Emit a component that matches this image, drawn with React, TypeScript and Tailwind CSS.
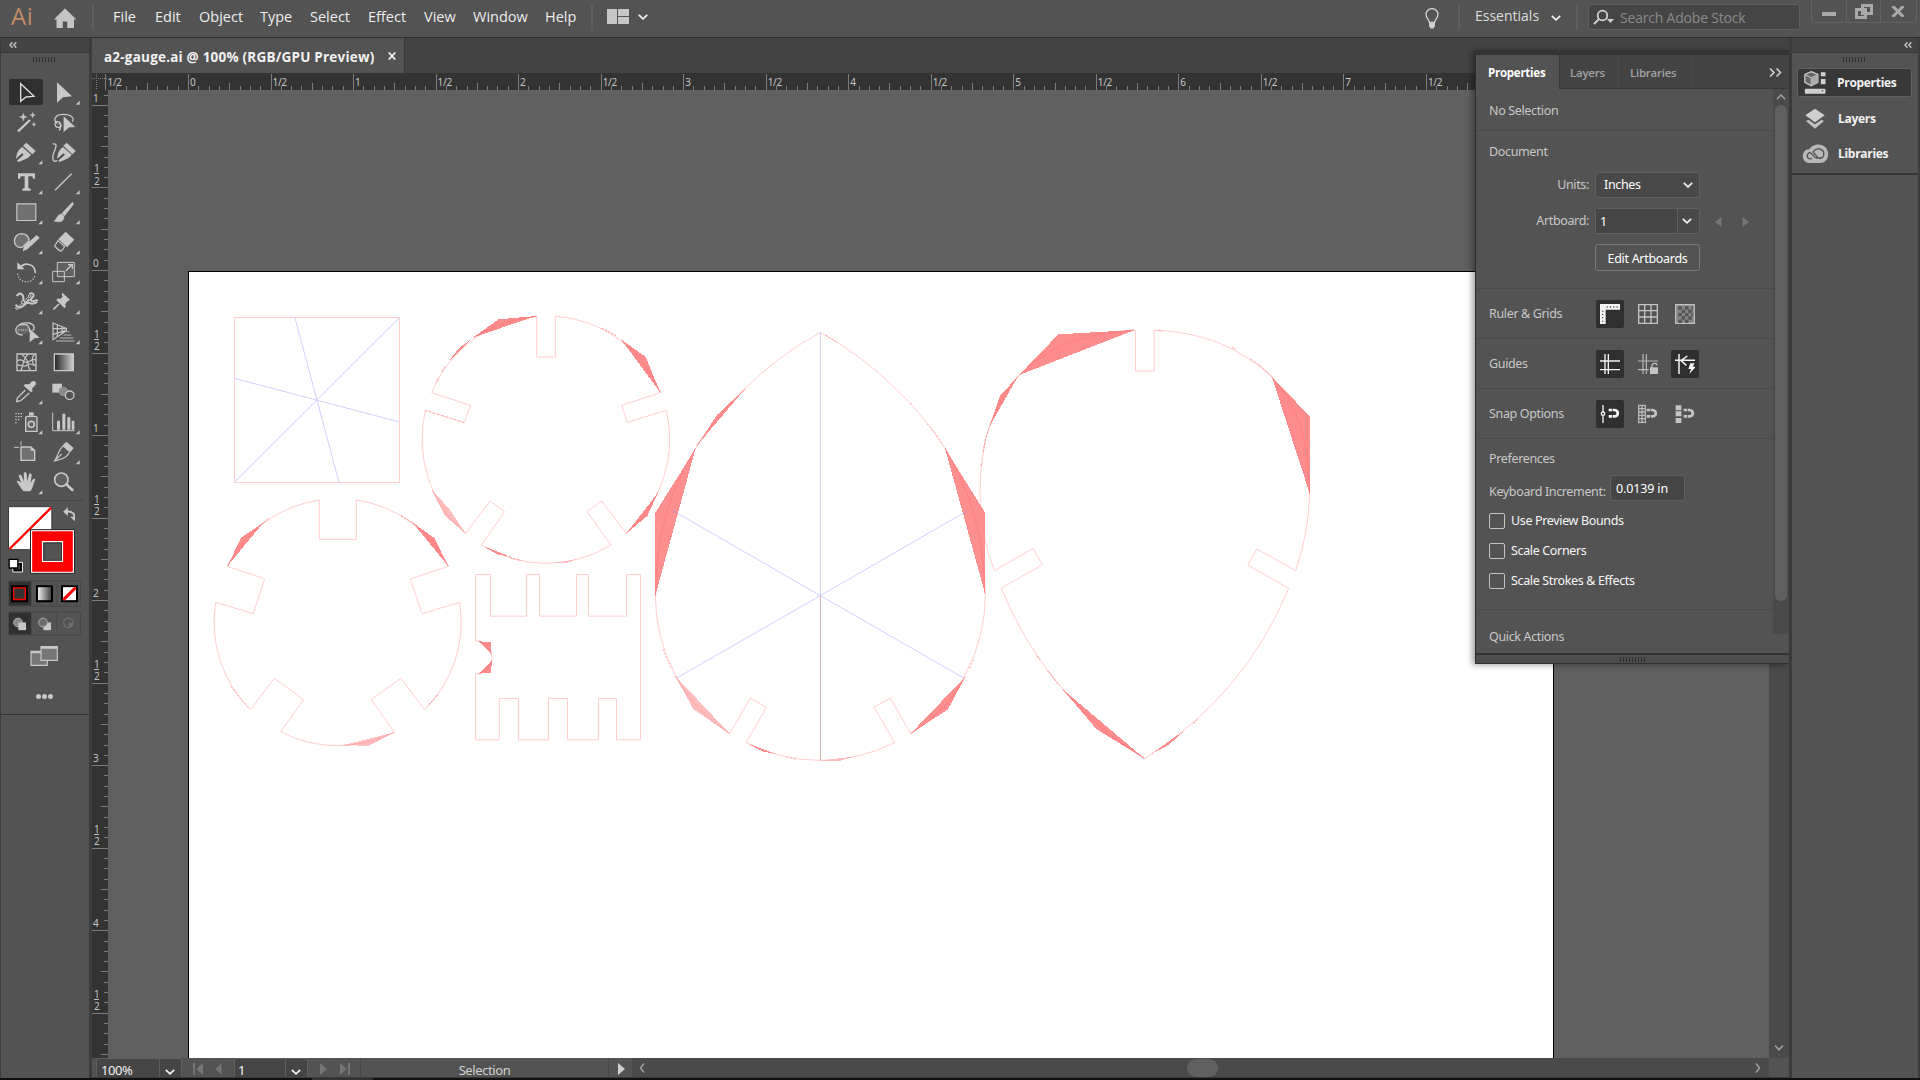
import React from 'react';

type IconProps = { vb: string; className?: string; children: React.ReactNode };

const Icon = ({ vb, className = '', children }: IconProps) => (
  <svg viewBox={vb} className={`block shrink-0 ${className}`} fill="none">
    {children}
  </svg>
);

const G = '#c8c8c8';

const Corner = ({ x, y }: { x: number; y: number }) => <path d={`M${x} ${y}v-12l-12 12z`} fill={G} />;

const Chevron = ({ className = '' }: { className?: string }) => (
  <Icon vb="0 0 10 6" className={`h-[6px] w-[10px] ${className}`}>
    <path d="M.8 .8 5 4.8 9.2 .8" stroke="#f0f0f0" strokeWidth="1.8" />
  </Icon>
);

const menus: [string, string][] = [
  ['File', 'w-[42px]'],
  ['Edit', 'w-[44px]'],
  ['Object', 'w-[61px]'],
  ['Type', 'w-[50px]'],
  ['Select', 'w-[58px]'],
  ['Effect', 'w-[56px]'],
  ['View', 'w-[49px]'],
  ['Window', 'w-[72px]'],
  ['Help', 'w-[46px]'],
];

function MenuBar() {
  return (
    <header className="flex h-[38px] shrink-0 items-start border-b border-[#303030] bg-[#535353]">
      <div className="mt-[1px] ml-[11px] w-[41px] font-['Open_Sans'] text-[24px] leading-[30px] font-medium tracking-[0.5px] text-[#c08a66]">Ai</div>
      <Icon vb="0 0 24 20" className="mt-[8px] ml-[1px] h-[20px] w-[24px]">
        <path d="M12 .5 23.5 11.500H21V20H14.200V13.500H9.800V20H3.500V11.500H.8z" fill="#c4c4c4" />
      </Icon>
      <div className="mt-[5px] ml-[15px] h-[25px] w-[2px] bg-[#5f5f5f]" />
      <nav className="ml-[19px] flex font-['Open_Sans'] text-[14.5px] leading-[33px] text-[#ececec]">
        {menus.map(([label, w]) => (
          <span key={label} className={`${w} whitespace-nowrap`}>{label}</span>
        ))}
      </nav>
      <div className="mt-[5px] h-[25px] w-[2px] bg-[#5f5f5f]" />
      <div className="mt-[9px] ml-[14px] flex h-[15px] w-[22px] gap-[1px]">
        <div className="w-[10px] bg-[#c6c6c6]" />
        <div className="flex flex-1 flex-col gap-[1px]">
          <div className="flex-1 bg-[#c6c6c6]" />
          <div className="flex-1 bg-[#c6c6c6]" />
        </div>
      </div>
      <Chevron className="mt-[14px] ml-[9px]" />
      <div className="flex-1" />
      <Icon vb="0 0 14 21" className="mt-[8px] h-[21px] w-[14px]">
        <path d="M4.500 14.500C4.500 11.500 1 10.500 1 6.600a6 6 0 0 1 12 0c0 3.900-3.500 4.900-3.500 7.900z" stroke="#cfcfcf" strokeWidth="1.400" />
        <path d="M4 14.500h6v3.500l-1.500 2.500h-3L4 18z" fill="#cfcfcf" />
      </Icon>
      <div className="mt-[5px] ml-[19px] h-[25px] w-[2px] bg-[#5f5f5f]" />
      <div className="ml-[15px] w-[76px] font-['Open_Sans'] text-[14px] leading-[32px] text-[#dcdcdc]">Essentials</div>
      <Chevron className="mt-[15px]" />
      <div className="mt-[5px] ml-[15px] h-[25px] w-[2px] bg-[#5f5f5f]" />
      <div className="mt-[4px] ml-[10px] flex h-[26px] w-[212px] rounded-[3px] border border-[#5f5f5f] bg-[#454545]">
        <Icon vb="0 0 22 16" className="mt-[4px] ml-[4px] h-[16px] w-[22px]">
          <circle cx="9.500" cy="6.500" r="4.800" stroke="#d0d0d0" strokeWidth="1.800" />
          <path d="M6 10 1 15" stroke="#d0d0d0" strokeWidth="2" />
          <path d="M14 10h7l-3.500 4z" fill="#d0d0d0" />
        </Icon>
        <span className="ml-[5px] font-['Open_Sans'] text-[14px] leading-[25px] tracking-[-0.2px] text-[#8a8a8a]">Search Adobe Stock</span>
      </div>
      <div className="ml-[11px] mr-[3px] flex h-[23px] w-[106px] rounded-b-[4px] border border-t-0 border-[#636363]">
        <div className="w-[35px] border-r border-[#636363] pt-[12px] pl-[10px]">
          <div className="h-[4px] w-[14px] bg-[#a9a9a9]" />
        </div>
        <div className="w-[34px] border-r border-[#636363] pt-[4px] pl-[8px]">
          <Icon vb="0 0 18 15" className="h-[15px] w-[18px]">
            <path d="M1.500 5.500h9v8h-9zM7.500 1.500h9v8h-9z" stroke="#a9a9a9" strokeWidth="3" />
          </Icon>
        </div>
        <div className="pt-[6px] pl-[10px]">
          <Icon vb="0 0 14 11" className="h-[11px] w-[14px]">
            <path d="M1.500 0 12.500 11M12.500 0 1.500 11" stroke="#a9a9a9" strokeWidth="3" />
          </Icon>
        </div>
      </div>
    </header>
  );
}

const Grip = ({ n = 8 }: { n?: number }) => (
  <div className="flex gap-[2px]">
    {Array.from({ length: n }, (_, i) => (
      <div key={i} className="h-[5px] w-[1px] bg-[#2e2e2e]" />
    ))}
  </div>
);

const DoubleLeft = () => (
  <Icon vb="0 0 8 6" className="h-[6px] w-[8px]">
    <path d="M3.500 .3 1 3l2.500 2.700M7.300 .3 4.800 3l2.500 2.700" stroke="#c4c4c4" strokeWidth="1.500" />
  </Icon>
);

/* Toolbox glyphs: each is drawn in a 108 x 90 cell whose origin is given by vb. */
const tools: { vb: string; on?: boolean; art: React.ReactNode }[] = [
  { vb: '24 21 108 90', on: true, art: <path d="M62 41 102 79 78 81 62 94z" stroke="#dedede" strokeWidth="4" /> },
  { vb: '138 21 108 90', art: <><path d="M171 37 216 79 189 82 171 98z" fill={G} /><Corner x={239} y={104} /></> },
  { vb: '24 111 108 90', art: <><path d="M54 184 90 150" stroke={G} strokeWidth="7" /><path d="m70 130 3 8 8 3-8 3-3 9-3-9-9-3 9-3zM98 127l2 6 6 2-6 2-2 7-2-7-6-2 6-2zM102 157l1 4 5 2-5 2-1 5-2-5-4-2 4-2z" fill={G} stroke={G} /></> },
  { vb: '138 111 108 90', art: <><path d="M172 160c-14-6-8-27 16-27 26-1 38 14 28 22M177 181c6-4 8-26-4-26s-9 18 3 17 8-12 0-11" stroke={G} strokeWidth="4" /><path d="m190 137 37 34-20 2-17 15z" fill={G} stroke="#535353" strokeWidth="1.500" /></> },
  { vb: '24 201 108 90', art: <><path d="m79 218 28 25-10 10-28-26zM66 230l27 24c-7 11-22 16-38 22l-4-4 20-18-5-4-18 16c2-16 6-26 18-34z" fill={G} /><Corner x={127} y={283} /></> },
  { vb: '138 201 108 90', art: <><path d="M158 222c20-4 5 18 1 34-2 12 0 22 13 16" stroke={G} strokeWidth="4" /><path d="m200 218 27 25-10 10-27-26zM188 230l27 24c-7 11-22 16-36 22l-4-4 20-18-5-4-18 16c0-16 6-26 16-34z" fill={G} /></> },
  { vb: '24 291 108 90', art: <><path d="M54 310h51v16h-6l-2-7H85v35l7 2v6H67v-6l7-2v-35H62l-2 7h-6z" fill={G} /><Corner x={127} y={373} /></> },
  { vb: '138 291 108 90', art: <><path d="m165 361 50-50" stroke={G} strokeWidth="4" /><Corner x={239} y={373} /></> },
  { vb: '24 381 108 90', art: <><path d="M50.500 401.500h57v50h-57z" fill="#707070" stroke={G} strokeWidth="3.500" /><Corner x={127} y={463} /></> },
  { vb: '138 381 108 90', art: <><path d="m217 397 4 5-27 35-8-7zM183 432c14 2 10 21-2 23-8 1-13 0-19-1 9-7 9-19 21-22z" fill={G} stroke={G} strokeWidth="1.500" /><Corner x={239} y={463} /></> },
  { vb: '24 471 108 90', art: <><path d="M63 533c-27-1-26-41 1-42 17 0 25 13 22 23l-18 17z" fill="#707070" stroke={G} strokeWidth="4" /><path d="m110 495 9 9-37 34-14 6 4-15z" fill={G} /><Corner x={127} y={553} /></> },
  { vb: '138 471 108 90', art: <><path d="m197 485 26 24-22 23-26-24z" fill={G} /><path d="m174 512 20 18-9 13q-8 0-21-15z" stroke={G} strokeWidth="3.500" /><Corner x={239} y={553} /></> },
  { vb: '24 561 108 90', art: <><path d="M60 594c11-18 46-16 46 16" stroke={G} strokeWidth="4.500" /><path d="M52 577v21h22z" fill={G} /><path d="M53 611c2 30 46 33 52 5" stroke={G} strokeWidth="4" strokeDasharray="3.500 5" /><Corner x={127} y={643} /></> },
  { vb: '138 561 108 90', art: <><path d="M172 577h51v43h-51z" fill="#606060" stroke={G} strokeWidth="3" /><path d="M158 604h35v31h-35z" stroke={G} strokeWidth="3" /><path d="m198 602 16-16M204 584h13v13" stroke={G} strokeWidth="4" /><Corner x={239} y={643} /></> },
  { vb: '24 651 108 90', art: <><path d="M50 678c10-15 22-4 20 11-2 14 12 10 18-2M88 672c6-4 13-2 13 4s-9 8-8 15c9 9 15-6 20 2M47 704c10 15 20 7 32-4 8-7 14 9 33-4" stroke={G} strokeWidth="6" /><path d="M50 716 90 676" stroke={G} strokeWidth="3" /><circle cx="69" cy="697" r="5" fill="#535353" stroke={G} strokeWidth="3" /><circle cx="51" cy="714" r="4" fill="#535353" stroke={G} strokeWidth="3" /><circle cx="89" cy="678" r="4" fill="#535353" stroke={G} strokeWidth="3" /><Corner x={127} y={733} /></> },
  { vb: '138 651 108 90', art: <><path d="m187 668 23 21-7 5-2 1-6 9 3 6-5 4-24-24 5-5 6 2 8-7-3-8z" fill={G} /><path d="m177 702-17 16" stroke={G} strokeWidth="5" /><Corner x={239} y={733} /></> },
  { vb: '24 741 108 90', art: <><path d="M52 771q10-15 34-12c16 2 21 15 12 23" stroke={G} strokeWidth="4" /><path d="M68 795c-28 1-27-31 0-31h12q10 8 9 22" fill="#666" stroke={G} strokeWidth="4" /><path d="M54 780h30" stroke={G} strokeWidth="3" strokeDasharray="4 3" /><path d="m89 776 30 27-15 2-15 12z" fill={G} /><Corner x={127} y={823} /></> },
  { vb: '138 741 108 90', art: <><path d="M159 759v50l40-27v-7zM172 763v37M186 769v22M159 776h40M160 793l36-11" stroke={G} strokeWidth="3.500" /><path d="M198 785h10M190 795h24M180 804h40M168 813h55" stroke="#969696" strokeWidth="4" /><Corner x={239} y={823} /></> },
  { vb: '24 831 108 90', art: <><path d="M51 852h57v50H51z" stroke={G} strokeWidth="4" /><path d="M52 873c19-12 15 10 32 3 11-5 14-10 24-6M52 886c14-3 21 8 29-1 10-9 18 4 27-1M63 901c9-19 4-33 21-48M91 901c-11-14-4-18-9-28-3-7-8-13-17-20M103 853c-11 13-6 30 3 35" stroke={G} strokeWidth="3.500" /></> },
  {
    vb: '138 831 108 90',
    art: (
      <>
        <defs>
          <linearGradient id="tool-grad"><stop stopColor="#222" /><stop offset="1" stopColor="#d0d0d0" /></linearGradient>
        </defs>
        <path d="M163 852h57v50h-57z" fill="url(#tool-grad)" stroke={G} strokeWidth="4" />
      </>
    ),
  },
  { vb: '24 -39 108 90', art: <><path d="M89-19c6-14 23-11 18 2l-11 12 2 7-5 4-22-20 5-5 6 1z" fill={G} transform="translate(0 1)" /><path d="M76 0 52 24l-2 11 12-3L88 9" stroke={G} strokeWidth="4" /><Corner x={127} y={43} /></> },
  { vb: '138 -39 108 90', art: <><path d="M157-19h29V8h-29z" fill={G} /><circle cx="190" cy="4" r="13" fill="#8a8a8a" stroke="#9c9c9c" strokeWidth="2" /><circle cx="209" cy="16" r="13" fill="#535353" stroke={G} strokeWidth="4" /></> },
  { vb: '24 51 108 90', art: <><path d="M87 67h14v10H87z" fill={G} /><path d="M77 83q1-4 7-4h20q7 0 7 5v40H77z" fill="#606060" stroke={G} strokeWidth="4" /><circle cx="94" cy="103" r="9" stroke={G} strokeWidth="5" /><path d="M46 71h22M46 80h22M46 89h15M46 98h8" stroke={G} strokeWidth="4" strokeDasharray="4 4" /><Corner x={127} y={133} /></> },
  { vb: '138 51 108 90', art: <><path d="M158 68v54h66" stroke={G} strokeWidth="3" /><path d="M171 91h9v27h-9zM187 70h9v48h-9zM202 81h9v37h-9zM215 91h8v27h-8z" fill={G} transform="translate(0 1)" /><Corner x={239} y={133} /></> },
  { vb: '24 141 108 90', art: <><path d="M63 171h29l12 10v30H63z" fill="#707070" stroke={G} strokeWidth="4" /><path d="M42 172h15M63 154v12" stroke={G} strokeWidth="3" /><path d="m92 169 14 13H92z" fill={G} /></> },
  { vb: '138 141 108 90', art: <><path d="m199 155 22 19-9 12-24-20z" fill={G} /><path d="m190 168 18 16c-3 18-23 23-44 29 10-18 14-38 26-45zM164 212l21-20" stroke={G} strokeWidth="3.500" /><Corner x={239} y={223} /></> },
  { vb: '24 231 108 90', art: <><path d="M64 296c-5-10-10-16-14-21 3-6 9-2 14 5l-8-22c1-5 7-4 9 0l7 16-1-23c2-6 8-5 9 0l2 23 5-21c3-5 9-2 8 3l-3 23 7-12c5-4 8 0 6 4-6 14-7 24-14 33H71z" fill={G} /><Corner x={127} y={313} /></> },
  { vb: '138 231 108 90', art: <><circle cx="184" cy="269" r="20" fill="#606060" stroke={G} strokeWidth="5" /><path d="m199 283 18 17" stroke={G} strokeWidth="8" strokeLinecap="round" /></> },
];

function ToolPanel() {
  return (
    <aside className="flex w-[92px] shrink-0 border-r-[3px] border-l border-[#3c3c3c] bg-[#535353]">
      <div className="flex w-full flex-col">
        <div className="flex h-[15px] items-center border-b border-[#373737] bg-[#434343] pl-[8px]"><DoubleLeft /></div>
        <div className="mt-[4px] ml-[32px]"><Grip /></div>
        <div className="mt-[15px] grid grid-cols-[38px_38px] pl-[7px]">
          {tools.map((t, i) => (
            <div key={i} className="flex h-[30px] w-[36px] items-center">
              <div className={t.on ? 'ml-[1px] h-[26px] w-[34px] overflow-hidden rounded-[2px] bg-[#2f2f2f]' : ''}>
                <Icon vb={t.vb} className={t.on ? '-mt-[2px] -ml-[1px] h-[30px] w-[36px]' : 'h-[30px] w-[36px]'}>{t.art}</Icon>
              </div>
            </div>
          ))}
        </div>
        <div className="mt-[3px] ml-[7px] h-px w-[76px] bg-[#484848]" />
        {/* Fill and stroke swatches */}
        <Icon vb="24 345 200 210" className="mt-[4px] ml-[7px] h-[70px] w-[67px]">
          <path d="M25 350h130v129H25z" fill="#fff" stroke="#3a3a3a" strokeWidth="3" />
          <path d="M28 477 153 353" stroke="#f00" strokeWidth="7" />
          <path d="M91 419h132v131H91z" fill="#fff" stroke="#222" strokeWidth="3" />
          <path d="M96 424h122v121H96z" fill="#f00" />
          <path d="M127 455h60v59h-60z" fill="#535353" stroke="#fff" strokeWidth="3.500" />
          <path d="M131 459h53v52h-53z" stroke="#222" strokeWidth="2" />
          <path d="M199 365c17-3 26 8 24 20" stroke={G} strokeWidth="6" />
          <path d="m189 365 14-13v26zM210 380h22l-9 13z" fill={G} />
          <path d="M38 517h29v29H38z" fill="#000" stroke="#eee" strokeWidth="3" />
          <path d="M45 524h14v14H45z" fill="#535353" />
          <path d="M27 508h26v26H27z" fill="#fff" stroke="#000" strokeWidth="4" />
        </Icon>
        <Icon vb="24 573 219 80" className="mt-[5px] ml-[7px] h-[27px] w-[73px]">
          <rect x="25" y="575" width="217" height="76" rx="6" stroke="#474747" strokeWidth="3" />
          <path d="M27 577h66v72H27z" fill="#303030" />
          <path d="M94 576v74M170 576v74" stroke="#474747" strokeWidth="2" />
          <path d="M33 588h51v51H33zM108 588h51v51h-51zM183 588h51v51h-51z" fill="#000" />
          <path d="M41 596h35v35H41z" fill="#333" stroke="#f00" strokeWidth="4" />
          <path d="M114 594h39v39h-39z" fill="url(#swatch-grad)" />
          <path d="M189 594h39v39h-39z" fill="#fff" />
          <path d="m190 632 37-37" stroke="#f00" strokeWidth="9" />
          <defs><linearGradient id="swatch-grad"><stop stopColor="#eee" /><stop offset="1" stopColor="#444" /></linearGradient></defs>
        </Icon>
        <Icon vb="24 665 219 74" className="mt-[4px] ml-[7px] h-[25px] w-[73px]">
          <rect x="25" y="667" width="217" height="70" rx="6" stroke="#474747" strokeWidth="3" />
          <path d="M27 669h66v66H27z" fill="#303030" />
          <path d="M94 668v68M170 668v68" stroke="#474747" strokeWidth="2" />
          <circle cx="54" cy="699" r="13" fill="#8a8a8a" stroke="#b0b0b0" strokeWidth="3" />
          <path d="M55 699h23v23H55z" fill={G} />
          <path d="M130 699h23v23h-23z" fill={G} />
          <circle cx="129" cy="699" r="13" fill="#6c6c6c" stroke="#b0b0b0" strokeWidth="3" />
          <circle cx="205" cy="700" r="14" stroke="#707070" strokeWidth="4" />
          <path d="M206 700h11v12h-11z" fill="#707070" />
        </Icon>
        <Icon vb="90 765 87 66" className="mt-[9px] ml-[29px] h-[22px] w-[29px]">
          <path d="M93 784h49v42H93z" fill="#777" stroke={G} strokeWidth="3.500" />
          <path d="M123 770h49v41h-49z" fill="#777" stroke={G} strokeWidth="3.500" />
          <path d="M93 787h30M123 773h49" stroke={G} strokeWidth="6" />
        </Icon>
        <div className="mt-[27px] ml-[35px] flex gap-[1px]">
          <div className="h-[5px] w-[5px] rounded-full bg-[#c8c8c8]" />
          <div className="h-[5px] w-[5px] rounded-full bg-[#c8c8c8]" />
          <div className="h-[5px] w-[5px] rounded-full bg-[#c8c8c8]" />
        </div>
        <div className="mt-[15px] h-px bg-[#333]" />
      </div>
    </aside>
  );
}

const INCH = 165.05;

function TopRuler() {
  const ticks = Array.from({ length: 140 }, (_, i) => i - 8);
  return (
    <svg className="block h-[17px] w-[1697px] bg-[#333]" viewBox="92 73 1697 17">
      {ticks.map((i) => {
        const x = Math.round(188 + (i * INCH) / 16) + 0.5;
        const y = i % 8 === 0 ? 74 : i % 4 === 0 ? 83 : 86;
        return <path key={i} d={`M${x} ${y}V90`} stroke="#7c7c7c" />;
      })}
      {Array.from({ length: 17 }, (_, k) => k - 1).map((k) => (
        <text key={k} x={190 + (k * INCH) / 2} y="85.500" fontSize="10" letterSpacing="-0.3" fill="#c4c4c4" fontFamily="'Noto Sans', sans-serif">
          {k % 2 === 0 ? k / 2 : '1/2'}
        </text>
      ))}
      <path d="M92 78.500h16" stroke="#7c7c7c" strokeDasharray="1 1" />
      <path d="M96.500 74v16" stroke="#7c7c7c" strokeDasharray="1 1" />
    </svg>
  );
}

function SideRuler() {
  const ticks = Array.from({ length: 95 }, (_, i) => i - 17);
  return (
    <svg className="block h-[968px] w-[16px] shrink-0 bg-[#333]" viewBox="92 90 16 968">
      {ticks.map((i) => {
        const y = Math.round(270 + (i * INCH) / 16) + 0.5;
        const x = i % 8 === 0 ? 92 : i % 4 === 0 ? 101 : 104;
        return <path key={i} d={`M${x} ${y}H108`} stroke="#7c7c7c" />;
      })}
      {Array.from({ length: 12 }, (_, k) => k - 2).map((k) => {
        const y = 270 + (k * INCH) / 2;
        return k % 2 === 0 ? (
          <text key={k} x="93" y={y - 3} fontSize="10" fill="#c4c4c4" fontFamily="'Noto Sans', sans-serif">{Math.abs(k / 2)}</text>
        ) : (
          <g key={k} fill="#c4c4c4" fontSize="10" fontFamily="'Noto Sans', sans-serif">
            <text x="94" y={y - 15}>1</text>
            <path d={`M94 ${Math.round(y - 14)}h5v1h-5z`} />
            <text x="94" y={y - 2.500}>2</text>
          </g>
        );
      })}
    </svg>
  );
}

const FILL = '#ff8c8c';
const SOFT = '#ffbcbc';

function Artwork() {
  const line = { stroke: '#ffcfcf', strokeWidth: 3, fill: 'none' };
  const guide = { stroke: '#d0d0fc', strokeWidth: 3, fill: 'none' };
  const inner = { stroke: '#ff7c7c', strokeWidth: 2.5, fill: 'none' };
  const sliver = { stroke: '#ff9090', strokeWidth: 3, fill: 'none', strokeDasharray: '7 4' };
  return (
    <svg className="block h-[787px] w-[1364px]" viewBox="189 272 1364 787">
      <g transform="translate(200 300) scale(.33333)">
        <path d="M103.500 52.500H598.500V547.500H103.500z" {...line} />
        <path d="M285 54 417 547M598 53 103 547M103 235 598 366" {...guide} />
        <path d="M469 600V718H358V600A372 371 0 0 0 82 799L194 836 160 941 47 907A372 371 0 0 0 151 1229L223 1135 311 1199 242 1295A372 371 0 0 0 583 1297L514 1199 603 1135 674 1229A372 371 0 0 0 779 907L666 941 631 837 745 799A372 371 0 0 0 469 600" {...line} />
        <g shapeRendering="crispEdges">
          <path d="M190 668 124 712 82 799zM638 668 703 714 745 799z" fill={FILL} />
          <path d="M430 1336 506 1337 583 1297z" fill={SOFT} />
        </g>
        <path d="M205 656 190 668M603 647 638 668M686 1214 716 1182" {...sliver} />
        <path d="M92 1158 143 1221" {...sliver} stroke="#ffa8a8" />
        <path d="M190 668Q126 716 82 799M638 668Q708 722 745 799" {...inner} />
        <path d="M430 1336Q510 1334 583 1297" {...inner} stroke="#ffa4a4" />
      </g>
      <g transform="translate(410 300) scale(.33333)">
        <path d="M380 48V171H436V48A371 371 0 0 1 751 278L635 316 652 367 769 331A371 371 0 0 1 649 700L575 603 531 635 603 735A371 371 0 0 1 214 735L284 635 240 603 167 700A371 371 0 0 1 46 331L163 368 181 316 65 278A371 371 0 0 1 380 48" {...line} />
        <path d="M197 823.500H241.500V948.500H349.500V823.500H388.500V948.500H499.500V823.500H535.500V948.500H649.500V823.500H691.500V1319.500H619.500V1195.500H565.500V1319.500H472.500V1195.500H415.500V1319.500H325.500V1195.500H268V1319.500H196.500V1121.500H208Q246 1110 246 1071 246 1035 208 1023H196.500V823.500" {...line} />
        <g shapeRendering="crispEdges">
          <path d="M190 112 265 58 380 48zM118 182 147 144 190 113 152 150zM634 119 707 171 751 278zM744 578 712 648 649 700zM206 1024 243 1026V1062zM206 1121 243 1118 246 1082z" fill={FILL} />
          <path d="M67 571 104 647 167 700 118 627z" fill={SOFT} />
          <path d="M217 737 262 763 300 770 255 752z" fill={FILL} />
          <path d="M425 789 470 789 500 778z" fill={SOFT} />
        </g>
        <path d="M190 112Q275 61 380 49M634 119Q715 190 751 278M744 578Q705 655 649 700M206 1024Q240 1037 243 1062M206 1121Q240 1108 245 1082" {...inner} />
        <path d="M106 200 93 218M84 236 78 248M575 84 618 107M300 773 334 782" {...sliver} />
        <path d="M67 571Q100 645 167 700" {...inner} stroke="#ffa4a4" />
        <path d="M46 331 163 368" {...sliver} strokeDasharray="4 9" />
      </g>
      <g transform="translate(960 310) scale(.33333)">
        <path d="M526.500 61V183H582.500V61Q790 65 937 202 1049 319 1049 552 1045 675 1007 782L890 717 863 765 986 835Q855 1155 554 1346 253 1155 124 835L247 764 219 715 103 782Q59 670 60 555 60 430 90 345 120 259 178 195 295 73 524 61" {...line} />
        <g shapeRendering="crispEdges">
          <path d="M178 195 295 73 524 60zM90 347 119 259 174 199zM936 202 1050 319V553zM308 1138 410 1258 554 1346z" fill={FILL} />
          <path d="M575 1332 625 1305 676 1261 635 1288z" fill={FILL} />
        </g>
        <path d="M178 195Q295 73 524 60M90 347 Q120 260 174 199M936 202Q1050 319 1048 553M308 1138Q410 1258 554 1346" {...inner} />
        <path d="M596 61H608M817 113 828 119M872 147Q905 168 936 200M86 355Q74 390 70 425M64 460V468M230 1037 240 1049M262 1082 298 1126M700 1240 714 1227" {...sliver} />
      </g>
      <g transform="translate(640 310) scale(.33333)">
        <path d="M541 67Q410 140 313 238 232 314 167 415 46 607 46 857A495 495 0 0 0 269 1271L331 1164 379 1192 318 1298A495 495 0 0 0 764 1298L702 1192 751 1164 812 1271A495 495 0 0 0 1036 857Q1034 607 915 415 850 314 769 238 672 140 541 67" {...line} />
        <g shapeRendering="crispEdges">
          <path d="M167 415 46 608V857zM915 415 1035 607V850zM170 408 232 314 315 237zM976 1100 924 1198 812 1271z" fill={FILL} fillOpacity=".98" />
          <path d="M105 1097 160 1198 269 1271z" fill={SOFT} />
          <path d="M318 1298 370 1325 410 1333z" fill={FILL} />
          <path d="M541 1352 600 1352 650 1339z" fill={SOFT} />
        </g>
        <path d="M167 415Q46 607 47 857M915 415Q1032 607 1034 850M170 408Q232 314 315 237M976 1100Q920 1205 812 1271" {...inner} />
        <path d="M862 342Q890 372 906 402M70 1018Q80 1050 96 1080M1000 1050 988 1078M812 279 818 286M558 76 594 98M440 1341 466 1347" {...sliver} strokeDasharray="4 7" />
        <path d="M105 1097Q165 1205 269 1271" {...inner} stroke="#ffa4a4" />
        <path d="M541.500 67V857M99 602 541 857 971 1104M981 603 541 857 110 1104" {...guide} />
        <path d="M99 602 112 609M981 603 968 610" stroke="#d277a0" strokeWidth="3" />
        <path d="M541.500 857V1352" stroke="#dcb0b0" strokeWidth="3" />
      </g>
    </svg>
  );
}

function StatusBar() {
  const dim = '#757575';
  return (
    <div className="flex h-[20px] shrink-0 border-b border-[#3a3a3a] bg-[#535353] font-['Noto_Sans'] text-[13px] leading-[14px] text-[#f0f0f0]">
      <div className="ml-[4px] flex h-full w-[86px] rounded-t-[3px] border border-b-0 border-[#606060] bg-[#454545]">
        <span className="w-[63px] border-r border-[#606060] pt-[4px] pl-[4px] tracking-[-0.4px]">100%</span>
        <Chevron className="mt-[10px] ml-[5px]" />
      </div>
      <Icon vb="0 0 38 12" className="mt-[5px] ml-[10px] h-[12px] w-[38px]">
        <path d="M1 0h2v12H1zM11 0v12L4 6zM29.500 0v12L23.500 6z" fill={dim} />
      </Icon>
      <div className="ml-[4px] flex h-full w-[74px] rounded-t-[3px] border border-b-0 border-[#606060] bg-[#454545]">
        <span className="w-[51px] border-r border-[#606060] pt-[4px] pl-[3px]">1</span>
        <Chevron className="mt-[10px] ml-[5px]" />
      </div>
      <Icon vb="0 0 38 12" className="mt-[5px] ml-[11px] h-[12px] w-[38px]">
        <path d="M1 0v12l7-6zM21 0v12l7-6zM29 0h2v12h-2z" fill={dim} />
      </Icon>
      <div className="ml-[3px] w-[249px] border-x border-[#484848] pt-[5px] text-center tracking-[-0.4px] text-[#d0d0d0]">Selection</div>
      <div className="w-[23px] pt-[5px] pl-[9px]">
        <Icon vb="0 0 7 12" className="h-[12px] w-[7px]"><path d="M0 0v12l7-6z" fill="#d0d0d0" /></Icon>
      </div>
      <div className="flex w-[1137px] bg-[#4a4a4a]">
        <Icon vb="0 0 6 10" className="mt-[5px] ml-[7px] h-[10px] w-[6px]"><path d="M5 .5 1.500 5 5 9.500" stroke="#a0a0a0" strokeWidth="1.500" /></Icon>
        <div className="mt-[1px] ml-[542px] h-[18px] w-[31px] rounded-[9px] bg-[#606060]" />
        <Icon vb="0 0 6 10" className="mt-[5px] ml-[537px] h-[10px] w-[6px]"><path d="M1 .5 4.500 5 1 9.500" stroke="#a0a0a0" strokeWidth="1.500" /></Icon>
      </div>
    </div>
  );
}

function DocumentArea() {
  return (
    <main className="flex w-[1697px] shrink-0 flex-col">
      <div className="flex h-[35px] shrink-0 bg-[#434343]">
        <div className="flex h-full w-[313px] items-center border-r border-[#383838] bg-[#535353] pl-[12px]">
          <span className="w-[284px] pt-[4px] font-['Open_Sans'] text-[13.5px] font-bold tracking-[0.21px] whitespace-nowrap text-[#f2f2f2]">a2-gauge.ai @ 100% (RGB/GPU Preview)</span>
          <Icon vb="0 0 8 8" className="h-[8px] w-[8px]"><path d="m.8 .5 6.400 7M7.200 .5.8 7.500" stroke="#eee" strokeWidth="1.800" /></Icon>
        </div>
      </div>
      <TopRuler />
      <div className="flex h-[968px]">
        <SideRuler />
        <div className="relative h-full w-[1661px] overflow-hidden bg-[#606060]">
          <div className="absolute top-[181px] left-[80px] h-[800px] w-[1366px] border border-black bg-white"><Artwork /></div>
        </div>
        <div className="flex w-[20px] flex-col items-center justify-end bg-[#4a4a4a] pb-[7px]">
          <Icon vb="0 0 10 6" className="h-[6px] w-[10px]"><path d="M1 .5 5 4.800 9 .5" stroke="#a0a0a0" strokeWidth="1.500" /></Icon>
        </div>
      </div>
      <StatusBar />
    </main>
  );
}

function Dock() {
  const text = "font-['Open_Sans'] text-[12px] font-bold tracking-[-0.3px] text-[#f2f2f2]";
  return (
    <aside className="flex flex-1 flex-col border-r-2 border-l-[3px] border-[#3c3c3c] bg-[#535353]">
      <div className="flex h-[15px] items-center justify-end border-b border-[#373737] bg-[#434343] pr-[6px]"><DoubleLeft /></div>
      <div className="mt-[4px] ml-[51px]"><Grip /></div>
      <div className="mt-[6px] ml-[5px] flex h-[29px] w-[115px] items-center rounded-[3px] border border-[#606060] bg-[#383838] pl-[6px]">
        <Icon vb="0 0 68 72" className="h-[24px] w-[23px]">
          <path d="m21 2 20 8v24L21 44 2 34V10z" fill="#666" stroke={G} strokeWidth="4" />
          <path d="m2 11 19 9 20-9M21 20v23" stroke={G} strokeWidth="3" />
          <path d="m21 20 19-8v22l-19 9z" fill="#aaa" />
          <path d="M50 4h14v12H50zM50 24h14v16H50z" fill="#d0d0d0" />
          <rect x="2" y="53" width="62" height="15" rx="3" fill="#d0d0d0" />
          <path d="m52 58 6 0-3 4z" fill="#333" />
        </Icon>
        <span className={`ml-[10px] ${text}`}>Properties</span>
      </div>
      <div className="mt-[4px] flex h-[35px] items-center pl-[12px]">
        <Icon vb="0 0 66 66" className="h-[22px] w-[22px]">
          <path d="M33 2 62 22 33 43 4 22z" fill="#d0d0d0" />
          <path d="m6 39 7-4 20 14 20-14 7 4-27 23z" fill="#c0c0c0" />
        </Icon>
        <span className={`ml-[12px] ${text}`}>Layers</span>
      </div>
      <div className="flex h-[35px] items-center pl-[10px]">
        <Icon vb="0 0 80 60" className="h-[20px] w-[27px]">
          <path d="M20 57C-6 54-2 14 22 16 32-4 76-6 78 30c0 18-12 27-24 27z" fill="#b8b8b8" />
          <path d="M58 42H44c-12 0-16-24-25-14-10 10 2 20 10 15M46 40 33 24c8-16 32-10 32 6 0 9-6 14-14 13" stroke="#535353" strokeWidth="4" />
        </Icon>
        <span className={`ml-[9px] ${text}`}>Libraries</span>
      </div>
      <div className="mt-[2px] h-[2px] bg-[#363636]" />
    </aside>
  );
}

const IconButton = ({ on = false, children }: { on?: boolean; children: React.ReactNode }) => (
  <div className={`flex h-[28px] w-[28px] items-center justify-center rounded-[2px] ${on ? 'bg-[#2f2f2f]' : ''}`}>
    <svg viewBox="0 0 60 60" className="h-[20px] w-[20px]" fill="none">{children}</svg>
  </div>
);

const Row = ({ label, children }: { label: string; children: React.ReactNode }) => (
  <div className="flex h-[50px] items-center border-b border-[#4a4a4a] pl-[13px]">
    <span className="w-[107px] pt-[2px]">{label}</span>
    <div className="flex gap-[9.500px]">{children}</div>
  </div>
);

const Check = ({ label }: { label: string }) => (
  <div className="flex h-[30px] items-center pl-[13px] text-[#f6f6f6]">
    <div className="h-[16px] w-[16px] rounded-[2px] border border-[#c4c4c4]" />
    <span className="ml-[6px]">{label}</span>
  </div>
);

const W = '#f4f4f4';
const magnet = 'M26 14h10v8H26zM26 33h10v8H26zM38 14h6c18 0 18 27 0 27h-6v-8h5c8 0 8-11 0-11h-5z';

function PropertiesPanel() {
  return (
    <section className="absolute top-[50px] left-[1475px] flex h-[614px] w-[314px] flex-col border-b border-l border-[#2e2e2e] bg-[#535353] font-['Noto_Sans'] text-[12.500px] tracking-[-0.35px] whitespace-nowrap text-[#c8c8c8] shadow-[-3px_1px_6px_rgba(0,0,0,0.35)]">
      <div className="h-[5px] shrink-0 bg-[#343434]" />
      <div className="flex h-[34px] shrink-0 bg-[#434343] font-['Open_Sans'] text-[11.5px] leading-[36px] font-bold tracking-[-0.25px]">
        <div className="w-[83px] bg-[#535353] pl-[12px] text-white">Properties</div>
        <div className="w-[60px] border-r border-b border-l border-r-[#4b4b4b] border-b-[#383838] border-l-[#383838] pl-[10px] font-semibold text-[#a2a2a2]">Layers</div>
        <div className="w-[73px] border-r border-b border-r-[#4b4b4b] border-b-[#383838] pl-[11px] font-semibold text-[#a2a2a2]">Libraries</div>
        <div className="flex flex-1 items-center justify-end border-b border-[#383838] pt-[1px] pr-[7px]">
          <Icon vb="0 0 13 9" className="h-[9px] w-[13px]"><path d="m1 .5 4 4-4 4M7.500 .5l4 4-4 4" stroke="#d6d6d6" strokeWidth="1.500" /></Icon>
        </div>
      </div>
      <div className="flex h-[564px] shrink-0">
        <div className="flex w-[297px] flex-col">
          <div className="flex h-[42px] items-center border-b border-[#4a4a4a] pt-[3px] pl-[13px]">No Selection</div>
          <div className="flex h-[158px] flex-col border-b border-[#4a4a4a] pl-[13px]">
            <div className="mt-[12px] h-[18px] leading-[18px]">Document</div>
            <div className="mt-[11px] flex items-center">
              <span className="w-[100px] pt-[1px] text-right">Units:</span>
              <div className="ml-[6px] flex h-[26px] w-[105px] items-center rounded-[3px] border border-[#606060] bg-[#484848] pl-[8px] text-white">
                <span className="flex-1 pt-[1px]">Inches</span>
                <Chevron className="mr-[6px]" />
              </div>
            </div>
            <div className="mt-[10px] flex items-center">
              <span className="w-[100px] pt-[1px] text-right">Artboard:</span>
              <div className="ml-[6px] flex h-[26px] w-[105px] items-center rounded-[3px] border border-[#606060] bg-[#484848] text-white">
                <span className="h-full w-[82px] border-r border-[#606060] bg-[#454545] pl-[4px] leading-[26px]">1</span>
                <Chevron className="ml-[4px]" />
              </div>
              <Icon vb="0 0 34 10" className="mt-[1px] ml-[15px] h-[10px] w-[34px]"><path d="M6.500 0v10L0 5zM27.500 0v10L34 5z" fill="#757575" /></Icon>
            </div>
            <div className="mt-[10px] ml-[106px] h-[27px] w-[105px] rounded-[3px] border border-[#7a7a7a] text-center leading-[27px] tracking-[-0.3px] text-white">Edit Artboards</div>
          </div>
          <Row label="Ruler &amp; Grids">
            <IconButton on>
              <path d="M0 0h60v17H17v43H0z" fill={W} />
              <path d="M20 9h36M8 20v36" stroke="#333" strokeWidth="4" strokeDasharray="3 7" />
            </IconButton>
            <IconButton>
              <path d="M2 2h56v56H2zM20 2v56M39 2v56M2 20h56M2 39h56" stroke="#c4c4c4" strokeWidth="4" />
            </IconButton>
            <IconButton>
              <path d="M2 2h56v56H2z" fill="#858585" stroke="#c4c4c4" strokeWidth="3.500" />
              <path d="M10 12h44M20 22h34M10 32h44M20 42h34M10 52h40" stroke="#555" strokeWidth="10" strokeDasharray="10 10" />
            </IconButton>
          </Row>
          <Row label="Guides">
            <IconButton on><path d="M15 0v60M25 0v60M0 21h60M0 47h60" stroke={W} strokeWidth="4" /></IconButton>
            <IconButton>
              <path d="M15 0v60M25 0v60M0 21h60M0 47h32" stroke="#b8b8b8" strokeWidth="3.500" />
              <path d="M36 40h27v22H36z" fill="#c4c4c4" />
              <path d="M42 42V33q2-5 8-5t8 6" stroke="#c4c4c4" strokeWidth="4" />
            </IconButton>
            <IconButton on>
              <path d="M12 0v60M0 19h60M37 6 18 20l16 14" stroke={W} strokeWidth="4.500" />
              <path d="M46 28h12l-4 10h9L43 60l5-15h-8z" fill={W} />
            </IconButton>
          </Row>
          <Row label="Snap Options">
            <IconButton on>
              <path d="M9 3v54" stroke={W} strokeWidth="4" />
              <circle cx="9" cy="29" r="5" fill="#2f2f2f" stroke={W} strokeWidth="4" />
              <path d={magnet} fill={W} />
            </IconButton>
            <IconButton>
              <path d="M2 2v56M12 2v56M22 2v56M0 4h24M0 14h24M0 24h24M0 34h24M0 44h24M0 55h24" stroke="#b8b8b8" strokeWidth="4" />
              <path d={magnet} fill="#c4c4c4" />
            </IconButton>
            <IconButton>
              <path d="M2 4h17v15H2zM2 22h17v15H2zM2 42h17v15H2z" fill="#c4c4c4" />
              <path d={magnet} fill="#c4c4c4" />
            </IconButton>
          </Row>
          <div className="flex h-[171px] flex-col border-b border-[#4a4a4a]">
            <div className="mt-[11px] ml-[13px] h-[18px] leading-[18px]">Preferences</div>
            <div className="mt-[7px] flex h-[26px] pl-[13px]">
              <span className="w-[121px] leading-[33px]">Keyboard Increment:</span>
              <span className="h-[26px] w-[75px] rounded-[3px] border border-[#606060] bg-[#454545] pl-[5px] leading-[26px] tracking-[-0.15px] text-white">0.0139 in</span>
            </div>
            <div className="mt-[5px]">
              <Check label="Use Preview Bounds" />
              <Check label="Scale Corners" />
              <Check label="Scale Strokes &amp; Effects" />
            </div>
          </div>
          <div className="mt-[18px] ml-[13px] leading-[18px]">Quick Actions</div>
        </div>
        <div className="flex h-[545px] w-[16px] flex-col items-center bg-[#4a4a4a]">
          <Icon vb="0 0 10 6" className="mt-[5px] h-[6px] w-[10px]"><path d="M.8 5.200 5 1l4.200 4.200" stroke="#a0a0a0" strokeWidth="1.500" /></Icon>
          <div className="mt-[5px] h-[496px] w-[12px] rounded-[6px] bg-[#606060]" />
        </div>
      </div>
      <div className="flex flex-1 items-center justify-center border-t-2 border-[#333] bg-[#4e4e4e]"><Grip n={9} /></div>
    </section>
  );
}

export default function App() {
  return (
    <div className="relative flex h-[1080px] w-[1920px] flex-col overflow-hidden bg-[#535353]">
      <MenuBar />
      <div className="flex h-[1040px] shrink-0">
        <ToolPanel />
        <DocumentArea />
        <Dock />
      </div>
      <div className="h-[2px] bg-[#101010]"><div className="ml-[312px] h-full w-[61px] bg-[#333]" /></div>
      <PropertiesPanel />
    </div>
  );
}
